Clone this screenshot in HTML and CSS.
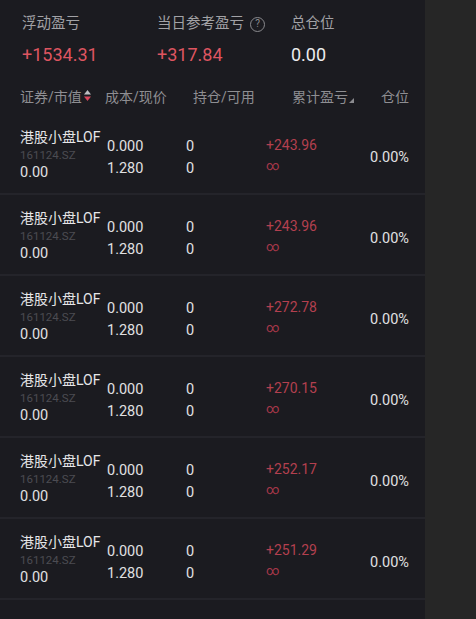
FILE: index.html
```html
<!DOCTYPE html>
<html lang="zh-CN">
<head>
  <meta charset="UTF-8">
  <title>持仓</title>
  <link rel="stylesheet" href="styles.css">
</head>
<body>

  <div class="panel">
    <div class="summary">
      <div class="stat stat-float">
        <div class="stat-label">浮动盈亏</div>
        <div class="stat-value up">+1534.31</div>
      </div>
      <div class="stat stat-day">
        <div class="stat-label">当日参考盈亏 <span class="help">?</span></div>
        <div class="stat-value up">+317.84</div>
      </div>
      <div class="stat">
        <div class="stat-label">总仓位</div>
        <div class="stat-value">0.00</div>
      </div>
    </div>

    <div class="thead">
      <div class="th th-name">证券/市值<svg class="sort" width="7" height="11" viewBox="0 0 7 11"><path d="M3.5 0 L7 4.5 L0 4.5 Z" fill="#bdbdc0"/><path d="M0 6.5 L7 6.5 L3.5 11 Z" fill="#d8455a"/></svg></div>
      <div class="th th-cost">成本/现价</div>
      <div class="th th-hold">持仓/可用</div>
      <div class="th th-pl">累计盈亏<svg class="corner" width="5" height="5" viewBox="0 0 5 5"><path d="M5 0 L5 5 L0 5 Z" fill="#8a8a8e"/></svg></div>
      <div class="th th-pos">仓位</div>
    </div>

    <div class="rows" id="rows"></div>
  </div>

  <script>
    const holdings = ["+243.96", "+243.96", "+272.78", "+270.15", "+252.17", "+251.29"];

    const rows = document.getElementById("rows");
    holdings.forEach(function (pl) {
      const row = document.createElement("div");
      row.className = "row";
      row.innerHTML =
        '<div class="cell name">' +
          '<div class="stock">港股小盘LOF</div>' +
          '<div class="code">161124.SZ</div>' +
          '<div class="mv">0.00</div>' +
        '</div>' +
        '<div class="cell two"><div>0.000</div><div>1.280</div></div>' +
        '<div class="cell two"><div>0</div><div>0</div></div>' +
        '<div class="cell pl"><div class="pl-value">' + pl + '</div><div class="pl-rate">∞</div></div>' +
        '<div class="cell pos">0.00%</div>';
      rows.appendChild(row);
    });
  </script>
</body>
</html>
```

FILE: styles.css
```css
body {
  margin: 0;
  padding: 0;
  background: #262626;
  font-family: Roboto, "Noto Sans CJK SC", sans-serif;
  color: #e0e0e2;
  height: 619px;
  overflow: hidden;
}

.panel {
  width: 425px;
  height: 619px;
  background: #1b1b20;
}

/* top summary */
.summary {
  display: flex;
  padding: 14px 0 0 22px;
  height: 69px;
  box-sizing: border-box;
}

.stat { width: 134px; }
.stat-float { width: 135px; }

.stat-label {
  font-size: 14.5px;
  line-height: 20px;
  color: #a2a2a6;
  display: flex;
  align-items: center;
}

.help {
  display: inline-flex;
  align-items: center;
  justify-content: center;
  width: 13px;
  height: 13px;
  margin-left: 6px;
  border: 1px solid #8a8a8e;
  border-radius: 50%;
  font-size: 10px;
  line-height: 1;
  color: #8a8a8e;
}

.stat-value {
  margin-top: 9px;
  font-size: 18px;
  line-height: 24px;
  color: #ececee;
}

.up { color: #de5560; }

/* column header */
.thead {
  display: flex;
  align-items: center;
  height: 45px;
  box-sizing: border-box;
  padding: 8px 16px 0 20px;
  font-size: 14px;
  color: #8e8e92;
}

.th { display: flex; align-items: center; }
.th-name { width: 85px; }
.th-cost { width: 88px; }
.th-hold { width: 99px; }
.th-pl { flex: 1; }
.th-pos { margin-left: auto; }

.sort { margin-left: 2px; }
.corner { margin-left: 1px; align-self: flex-end; margin-bottom: 3px; }

/* rows */
.row {
  display: grid;
  grid-template-columns: 87px 79px 80px 1fr auto;
  align-items: center;
  height: 81px;
  box-sizing: border-box;
  padding: 8px 16px 0 20px;
  border-bottom: 2px solid #24242a;
}

.name {
  align-self: start;
  margin-top: 6px;
}

.name .stock {
  font-size: 14px;
  line-height: 18px;
  color: #e6e6e8;
  white-space: nowrap;
}

.name .code {
  font-size: 11.5px;
  line-height: 18px;
  color: #4c4c52;
}

.name .mv {
  font-size: 14.5px;
  line-height: 18px;
}

.two div {
  font-size: 14.5px;
  line-height: 22px;
}

.pl { margin-top: -5px; }

.pl-value {
  font-size: 14px;
  line-height: 22px;
  color: #b3404f;
}

.pl-rate {
  font-size: 13px;
  line-height: 20px;
  color: #a8384a;
}

.pos {
  font-size: 14.5px;
  text-align: right;
}
```
